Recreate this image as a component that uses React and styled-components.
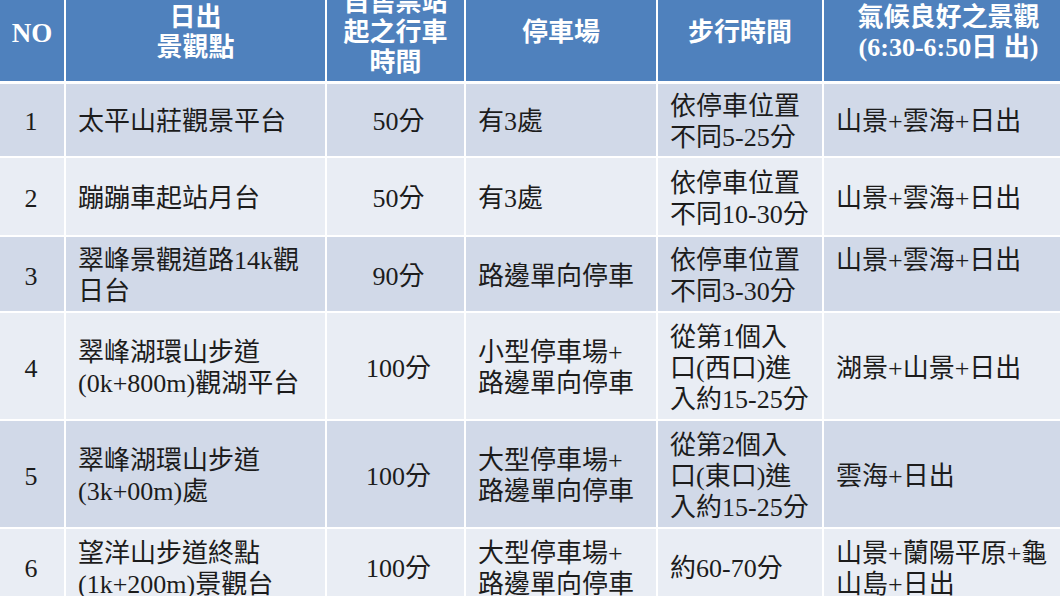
import styled, { createGlobalStyle } from "styled-components";

const Global = createGlobalStyle`
  html, body {
    margin: 0;
    padding: 0;
    background: #ffffff;
    overflow: hidden;
  }
`;

const Page = styled.div`
  width: 1060px;
  height: 596px;
  overflow: hidden;
`;

const Table = styled.table`
  margin-top: -14px;
  margin-left: -6px;
  border-collapse: collapse;
  table-layout: fixed;
  width: 1079px;
  font-family: "Liberation Serif", "Noto Sans CJK TC", serif;
  font-size: 26px;
  color: #1c1c1c;
`;

const HeadRow = styled.tr`
  height: 96px;
  background: #4f81bd;
`;

const HeadCell = styled.th`
  border-left: 2px solid #ffffff;
  border-bottom: 3px solid #ffffff;
  padding: 0 4px;
  color: #ffffff;
  font-weight: bold;
  line-height: 30px;
  text-align: center;
  vertical-align: middle;
  &:first-child {
    border-left: none;
    font-size: 27px;
    padding-left: 10px;
  }
`;

const Row = styled.tr`
  height: ${(p) => p.$h}px;
  background: ${(p) => (p.$odd ? "#d1d9e8" : "#e9edf4")};
`;

const Cell = styled.td`
  border-left: 2px solid #ffffff;
  border-top: 2px solid #ffffff;
  padding: 4px 6px 0 12px;
  line-height: 31px;
  vertical-align: middle;
  text-align: ${(p) => (p.$center ? "center" : "left")};
  white-space: nowrap;
  &:first-child {
    border-left: none;
    padding-left: 10px;
  }
`;

const cols = [71, 261, 139, 192, 166, 250];

const rows = [
  {
    no: "1",
    spot: ["太平山莊觀景平台"],
    drive: "50分",
    park: ["有3處"],
    walk: ["依停車位置", "不同5-25分"],
    view: ["山景+雲海+日出"],
    h: 75,
  },
  {
    no: "2",
    spot: ["蹦蹦車起站月台"],
    drive: "50分",
    park: ["有3處"],
    walk: ["依停車位置", "不同10-30分"],
    view: ["山景+雲海+日出"],
    h: 79,
  },
  {
    no: "3",
    spot: ["翠峰景觀道路14k觀", "日台"],
    drive: "90分",
    park: ["路邊單向停車"],
    walk: ["依停車位置", "不同3-30分"],
    view: ["山景+雲海+日出", "\u00a0"],
    h: 76,
  },
  {
    no: "4",
    spot: ["翠峰湖環山步道", "(0k+800m)觀湖平台"],
    drive: "100分",
    park: ["小型停車場+", "路邊單向停車"],
    walk: ["從第1個入", "口(西口)進", "入約15-25分"],
    view: ["湖景+山景+日出"],
    h: 108,
  },
  {
    no: "5",
    spot: ["翠峰湖環山步道", "(3k+00m)處"],
    drive: "100分",
    park: ["大型停車場+", "路邊單向停車"],
    walk: ["從第2個入", "口(東口)進", "入約15-25分"],
    view: ["雲海+日出"],
    h: 108,
  },
  {
    no: "6",
    spot: ["望洋山步道終點", "(1k+200m)景觀台"],
    drive: "100分",
    park: ["大型停車場+", "路邊單向停車"],
    walk: ["約60-70分"],
    view: ["山景+蘭陽平原+龜", "山島+日出"],
    h: 76,
  },
];

function Lines({ items }) {
  return items.map((t, i) => (
    <span key={i}>
      {i > 0 && <br />}
      {t}
    </span>
  ));
}

export default function App() {
  return (
    <Page>
      <Global />
      <Table>
        <colgroup>
          {cols.map((w, i) => (
            <col key={i} style={{ width: w }} />
          ))}
        </colgroup>
        <thead>
          <HeadRow>
            <HeadCell>NO</HeadCell>
            <HeadCell>
              日出
              <br />
              景觀點
            </HeadCell>
            <HeadCell>
              自售票站
              <br />
              起之行車
              <br />
              時間
            </HeadCell>
            <HeadCell>停車場</HeadCell>
            <HeadCell>步行時間</HeadCell>
            <HeadCell>
              氣候良好之景觀
              <br />
              (6:30-6:50日 出)
            </HeadCell>
          </HeadRow>
        </thead>
        <tbody>
          {rows.map((r, i) => (
            <Row key={r.no} $h={r.h} $odd={i % 2 === 0}>
              <Cell $center>{r.no}</Cell>
              <Cell>
                <Lines items={r.spot} />
              </Cell>
              <Cell $center>{r.drive}</Cell>
              <Cell>
                <Lines items={r.park} />
              </Cell>
              <Cell>
                <Lines items={r.walk} />
              </Cell>
              <Cell>
                <Lines items={r.view} />
              </Cell>
            </Row>
          ))}
        </tbody>
      </Table>
    </Page>
  );
}
